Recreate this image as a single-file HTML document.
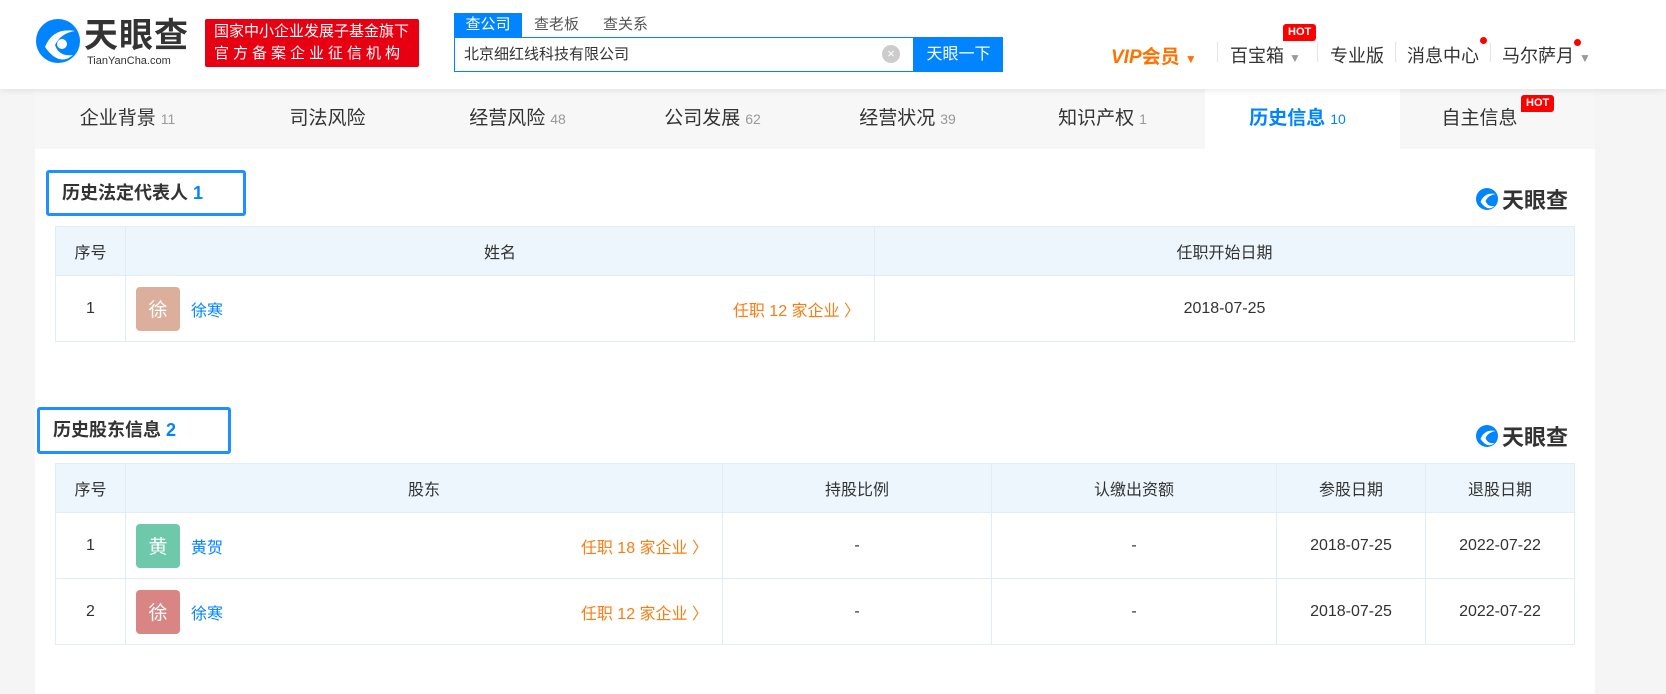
<!DOCTYPE html>
<html><head><meta charset="utf-8">
<style>
*{margin:0;padding:0;box-sizing:border-box}
body{width:1666px;height:694px;overflow:hidden;background:#f5f5f5;font-family:"Liberation Sans","Noto Sans CJK SC",sans-serif;color:#333;position:relative}
.abs{position:absolute}
.header{left:0;top:0;width:1666px;height:89px;background:#fff;box-shadow:0 2px 6px rgba(0,0,0,.08);z-index:2}
.panel{left:35px;top:89px;width:1560px;height:605px;background:#fff}
.nav{left:35px;top:89px;width:1560px;height:60px;background:#f7f7f7;display:flex}
.nav div{width:195px;height:60px;line-height:60px;text-align:center;font-size:19px;color:#333;position:relative}
.nav span{font-size:14px;color:#999;margin-left:5px}
.nav .act{background:#fff;color:#0084ff;font-weight:bold}
.nav .act span{color:#0084ff;font-weight:normal}
.hot{background:#f00;color:#fff;font-size:11px;font-weight:bold;line-height:16px;height:17px;padding:0 5px;border-radius:3px 3px 3px 0;font-family:"Liberation Sans",sans-serif}
table{position:absolute;border-collapse:collapse;font-size:16px;color:#333}
td,th{border:1px solid #e1ecf4;text-align:center;font-weight:normal}
th{background:#edf6fc;height:49px}
td{height:66px}
.name{text-align:left;position:relative;padding-left:10px}
.nw{display:flex;align-items:center}
.av{display:flex;align-items:center;justify-content:center;width:44px;height:44px;border-radius:4px;color:#fff;font-size:19px}
.lk{color:#0084ff;margin-left:11px}
.job{position:absolute;right:14px;top:50%;transform:translateY(-50%);color:#fa7d14}
.ttl{border:3px solid #1e90ff;border-radius:3px;font-size:18px;font-weight:bold;color:#333;padding-left:13px;line-height:44px}
.ttl b{color:#0084ff}
.tlogo{font-size:22px;font-weight:bold;color:#333;display:flex;align-items:center;gap:3px}
.sep{width:1px;height:20px;background:#e5e5e5;top:42px}
.dot{width:7px;height:7px;border-radius:50%;background:#f00}
</style></head><body>
<div class="abs header">
  <svg class="abs" style="left:35px;top:17px" width="46" height="48" viewBox="0 0 46 48"><circle cx="23" cy="24" r="22" fill="#0084ff"/><path d="M10 30 Q18 10 40 14 Q26 16 20 28 Q24 40 38 38 Q24 50 10 30Z" fill="#fff"/><circle cx="27" cy="27" r="5" fill="#fff"/></svg>
  <div class="abs" style="left:84px;top:17px;font-size:34px;font-weight:bold;color:#333;letter-spacing:1px;line-height:38px">天眼查</div>
  <div class="abs" style="left:87px;top:55px;font-size:11px;color:#333">TianYanCha.com</div>
  <div class="abs" style="left:205px;top:19px;width:214px;height:48px;background:#e60012;border-radius:2px;color:#fff;font-size:15px;line-height:22px;padding:2px 0 0 9px">国家中小企业发展子基金旗下<br><span style="letter-spacing:4px">官方备案企业征信机构</span></div>
  <div class="abs" style="left:454px;top:13px;width:68px;height:24px;background:#0084ff;color:#fff;font-size:15px;line-height:24px;text-align:center">查公司</div>
  <div class="abs" style="left:534px;top:13px;font-size:15px;color:#555;line-height:24px">查老板</div>
  <div class="abs" style="left:603px;top:13px;font-size:15px;color:#555;line-height:24px">查关系</div>
  <div class="abs" style="left:454px;top:37px;width:460px;height:35px;border:1px solid #0084ff;font-size:15px;line-height:33px;padding-left:9px;color:#333">北京细红线科技有限公司</div>
  <div class="abs" style="left:882px;top:45px;width:18px;height:18px;border-radius:50%;background:#ccc;color:#fff;font-size:13px;text-align:center;line-height:18px">×</div>
  <div class="abs" style="left:914px;top:37px;width:89px;height:35px;background:#0084ff;color:#fff;font-size:16px;text-align:center;line-height:35px">天眼一下</div>
  <div class="abs" style="left:1111px;top:42px;font-size:19px;font-weight:bold;color:#ff7200;font-style:italic">VIP<span style="font-style:normal">会员</span> <span style="font-size:12px;font-style:normal">▼</span></div>
  <div class="abs sep" style="left:1217px"></div>
  <div class="abs" style="left:1230px;top:42px;font-size:18px;color:#333">百宝箱 <span style="font-size:12px;color:#999">▼</span></div>
  <div class="abs hot" style="left:1283px;top:24px">HOT</div>
  <div class="abs sep" style="left:1317px"></div>
  <div class="abs" style="left:1330px;top:42px;font-size:18px;color:#333">专业版</div>
  <div class="abs sep" style="left:1395px"></div>
  <div class="abs" style="left:1407px;top:42px;font-size:18px;color:#333">消息中心</div>
  <div class="abs dot" style="left:1480px;top:37px"></div>
  <div class="abs sep" style="left:1490px"></div>
  <div class="abs" style="left:1502px;top:42px;font-size:18px;color:#333">马尔萨月 <span style="font-size:12px;color:#999">▼</span></div>
  <div class="abs dot" style="left:1574px;top:39px"></div>
</div>
<div class="abs panel"></div>
<div class="abs nav">
  <div style="padding-right:10px">企业背景<span>11</span></div><div>司法风险</div><div style="padding-right:10px">经营风险<span>48</span></div><div style="padding-right:10px">公司发展<span>62</span></div><div style="padding-right:10px">经营状况<span>39</span></div><div style="padding-right:10px">知识产权<span>1</span></div><div class="act" style="padding-right:10px">历史信息<span>10</span></div><div style="padding-right:36px">自主信息</div>
</div>
<div class="abs hot" style="left:1521px;top:95px">HOT</div>

<div class="abs ttl" style="left:46px;top:170px;width:200px;height:46px;line-height:40px">历史法定代表人 <b>1</b></div>
<div class="abs tlogo" style="left:1475px;top:183px"><svg width="24" height="24" viewBox="0 0 46 48"><circle cx="23" cy="24" r="22" fill="#0084ff"/><path d="M10 30 Q18 10 40 14 Q26 16 20 28 Q24 40 38 38 Q24 50 10 30Z" fill="#fff"/></svg>天眼查</div>
<table style="left:55px;top:226px;width:1520px">
<tr><th style="width:70px">序号</th><th style="width:749px">姓名</th><th>任职开始日期</th></tr>
<tr><td>1</td><td class="name"><div class="nw"><span class="av" style="background:#dbaf9b">徐</span><span class="lk">徐寒</span></div><span class="job">任职 12 家企业 〉</span></td><td>2018-07-25</td></tr>
</table>

<div class="abs ttl" style="left:37px;top:407px;width:194px;height:47px;line-height:41px">历史股东信息 <b>2</b></div>
<div class="abs tlogo" style="left:1475px;top:420px"><svg width="24" height="24" viewBox="0 0 46 48"><circle cx="23" cy="24" r="22" fill="#0084ff"/><path d="M10 30 Q18 10 40 14 Q26 16 20 28 Q24 40 38 38 Q24 50 10 30Z" fill="#fff"/></svg>天眼查</div>
<table style="left:55px;top:463px;width:1520px">
<tr><th style="width:70px">序号</th><th style="width:597px">股东</th><th style="width:269px">持股比例</th><th style="width:285px">认缴出资额</th><th style="width:149px">参股日期</th><th>退股日期</th></tr>
<tr><td>1</td><td class="name"><div class="nw"><span class="av" style="background:#6dc9a9">黄</span><span class="lk">黄贺</span></div><span class="job">任职 18 家企业 〉</span></td><td>-</td><td>-</td><td>2018-07-25</td><td>2022-07-22</td></tr>
<tr><td>2</td><td class="name"><div class="nw"><span class="av" style="background:#d98583">徐</span><span class="lk">徐寒</span></div><span class="job">任职 12 家企业 〉</span></td><td>-</td><td>-</td><td>2018-07-25</td><td>2022-07-22</td></tr>
</table>
</body></html>
